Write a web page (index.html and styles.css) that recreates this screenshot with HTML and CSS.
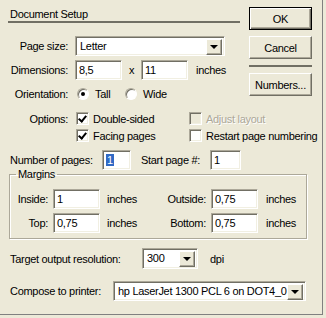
FILE: index.html
```html
<!DOCTYPE html>
<html lang="en">
<head>
    <meta charset="UTF-8">
    <title>Document Setup</title>
    <link rel="stylesheet" href="styles.css">
</head>
<body>
    <div class="dialog">
        <div class="top">
            <div class="top-form">
                <div class="title">Document Setup</div>
                <div class="grid">
                    <span class="lbl">Page size:</span>
                    <div class="select wide"><span class="val">Letter</span><span class="arrow"></span></div>

                    <span class="lbl">Dimensions:</span>
                    <div class="line">
                        <span class="input w47">8,5</span>
                        <span class="times">x</span>
                        <span class="input w47">11</span>
                        <span class="unit">inches</span>
                    </div>

                    <span class="lbl">Orientation:</span>
                    <div class="line">
                        <span class="radio on"></span><span class="rtext">Tall</span>
                        <span class="radio"></span><span class="rtext">Wide</span>
                    </div>
                </div>
            </div>
            <div class="buttons">
                <button class="btn default">OK</button>
                <button class="btn">Cancel</button>
                <div class="sep"></div>
                <button class="btn">Numbers...</button>
            </div>
        </div>

        <div class="options">
            <span class="lbl">Options:</span>
            <label class="check"><span class="box on"></span>Double-sided</label>
            <label class="check disabled"><span class="box"></span>Adjust layout</label>
            <span></span>
            <label class="check"><span class="box on"></span>Facing pages</label>
            <label class="check"><span class="box"></span>Restart page numbering</label>
        </div>

        <div class="pages">
            <span class="pages-lbl">Number of pages:</span>
            <span class="input w29"><span class="sel">1</span></span>
            <span class="start-lbl">Start page #:</span>
            <span class="input w31">1</span>
        </div>

        <fieldset class="margins">
            <legend>Margins</legend>
            <span class="mlbl">Inside:</span>
            <span class="input w47">1</span>
            <span class="munit">inches</span>
            <span class="mlbl">Outside:</span>
            <span class="input w47">0,75</span>
            <span class="munit">inches</span>

            <span class="mlbl">Top:</span>
            <span class="input w47">0,75</span>
            <span class="munit">inches</span>
            <span class="mlbl">Bottom:</span>
            <span class="input w47">0,75</span>
            <span class="munit">inches</span>
        </fieldset>

        <div class="row target">
            <span class="row-lbl res">Target output resolution:</span>
            <div class="select res-sel"><span class="val">300</span><span class="arrow"></span></div>
            <span class="dpi">dpi</span>
        </div>

        <div class="row compose">
            <span class="row-lbl prn">Compose to printer:</span>
            <div class="select prn-sel"><span class="val">hp LaserJet 1300 PCL 6 on DOT4_0</span><span class="arrow"></span></div>
        </div>
    </div>
</body>
</html>
```

FILE: styles.css
```css
body {
    margin: 0;
    background: #ECE9D8;
    font-family: "Liberation Sans", Arial, sans-serif;
    font-size: 11px;
    letter-spacing: -0.3px;
    color: #000;
}

.dialog {
    width: 322px;
    height: 314px;
    border-right: 1px solid #808080;
    border-bottom: 1px solid #808080;
}

.top {
    display: flex;
    height: 104px;
}
.top-form {
    width: 249px;
}
.title {
    margin-left: 8px;
    width: 230px;
    padding: 8px 0 1px 2px;
    line-height: 12px;
    border-bottom: 2px solid #716F64;
}
.grid {
    display: grid;
    grid-template-columns: 68px auto;
    column-gap: 7px;
    row-gap: 4px;
    margin-top: 13px;
    grid-auto-rows: 20px;
}
.lbl {
    text-align: right;
    align-self: center;
}
.line {
    display: flex;
    align-items: center;
}

/* sunken fields */
.input, .select {
    box-sizing: border-box;
    height: 20px;
    background: #fff;
    border: 1px solid;
    border-color: #ACA899 #fff #fff #ACA899;
    box-shadow: inset 1px 1px #716F64, inset -1px -1px #F1EFE2;
    padding: 3px 0 0 3px;
    line-height: 13px;
    display: inline-block;
}
.w47 { width: 47px; }
.w29 { width: 29px; }
.w31 { width: 31px; }
.sel {
    background: #316AC5;
    color: #fff;
    padding: 0 1px;
}
.times {
    width: 19px;
    text-align: center;
}
.unit {
    margin-left: 8px;
}

.select {
    display: flex;
    padding: 2px;
}
.select .val {
    flex: 1;
    padding: 1px 0 0 2px;
    overflow: hidden;
    white-space: nowrap;
}
.arrow {
    box-sizing: border-box;
    width: 16px;
    height: 16px;
    flex: none;
    background: #ECE9D8;
    border: 1px solid;
    border-color: #fff #716F64 #716F64 #fff;
    box-shadow: inset -1px -1px #ACA899;
    position: relative;
}
.arrow::after {
    content: "";
    position: absolute;
    left: 3px;
    top: 5px;
    border-left: 4px solid transparent;
    border-right: 4px solid transparent;
    border-top: 4px solid #000;
}
.wide {
    width: 150px;
}

/* radios */
.radio {
    box-sizing: border-box;
    width: 12px;
    height: 12px;
    border-radius: 50%;
    background: #fff;
    border: 1px solid;
    border-color: #ACA899 #fff #fff #ACA899;
    box-shadow: inset 1px 1px #716F64;
    margin-left: 2px;
    position: relative;
}
.radio.on::after {
    content: "";
    position: absolute;
    left: 3px;
    top: 3px;
    width: 4px;
    height: 4px;
    border-radius: 50%;
    background: #000;
}
.rtext {
    margin-left: 6px;
    width: 28px;
}

/* buttons */
.buttons {
    display: flex;
    flex-direction: column;
    gap: 6px;
    padding-top: 7px;
    width: 63px;
}
.btn {
    box-sizing: border-box;
    height: 23px;
    width: 63px;
    font: inherit;
    letter-spacing: inherit;
    color: #000;
    background: #ECE9D8;
    border: 1px solid;
    border-color: #fff #716F64 #716F64 #fff;
    box-shadow: inset -1px -1px #ACA899;
    padding: 0;
}
.btn.default {
    border-color: #000;
    box-shadow: inset 1px 1px #fff, inset -1px -1px #716F64, inset -2px -2px #ACA899;
}
.sep {
    height: 2px;
    background: #716F64;
}

/* checkboxes */
.options {
    display: grid;
    grid-template-columns: 68px 105px auto;
    column-gap: 8px;
    grid-auto-rows: 17px;
    margin-top: 6px;
}
.options .lbl {
    align-self: center;
}
.check {
    display: flex;
    align-items: center;
    white-space: nowrap;
}
.box {
    box-sizing: border-box;
    width: 13px;
    height: 13px;
    margin-right: 4px;
    background: #fff;
    border: 1px solid;
    border-color: #ACA899 #fff #fff #ACA899;
    box-shadow: inset 1px 1px #716F64, inset -1px -1px #F1EFE2;
    position: relative;
}
.box.on::after {
    content: "";
    position: absolute;
    left: 3px;
    top: 1px;
    width: 3px;
    height: 6px;
    border-right: 2px solid #000;
    border-bottom: 2px solid #000;
    transform: rotate(40deg);
}
.check.disabled {
    color: #ACA899;
    text-shadow: 1px 1px #fff;
}
.check.disabled .box {
    background: #ECE9D8;
}

.pages {
    display: flex;
    align-items: center;
    margin-top: 6px;
    padding-left: 10px;
    height: 20px;
}
.pages-lbl {
    width: 92px;
}
.start-lbl {
    width: 69px;
    margin-left: 10px;
}

/* group box */
.margins {
    margin: -2px 0 0 9px;
    width: 298px;
    box-sizing: border-box;
    padding: 9px 0 5px 0;
    border: 1px solid #ACA899;
    box-shadow: 1px 1px #fff, inset 1px 1px #fff;
    display: grid;
    grid-template-columns: 43px 54px 40px 64px 55px auto;
    grid-auto-rows: 20px;
    row-gap: 4px;
    align-items: center;
}
.margins legend {
    margin-left: 6px;
    padding: 0 2px;
    line-height: 12px;
}
.mlbl {
    text-align: right;
    padding-right: 5px;
}

.row {
    display: flex;
    align-items: center;
    padding-left: 10px;
}
.target {
    margin-top: 9px;
}
.compose {
    margin-top: 12px;
}
.res {
    width: 132px;
}
.prn {
    width: 103px;
}
.select.res-sel {
    width: 56px;
    height: 21px;
}
.select.prn-sel {
    width: 193px;
    height: 20px;
}
.dpi {
    margin-left: 12px;
}
```
